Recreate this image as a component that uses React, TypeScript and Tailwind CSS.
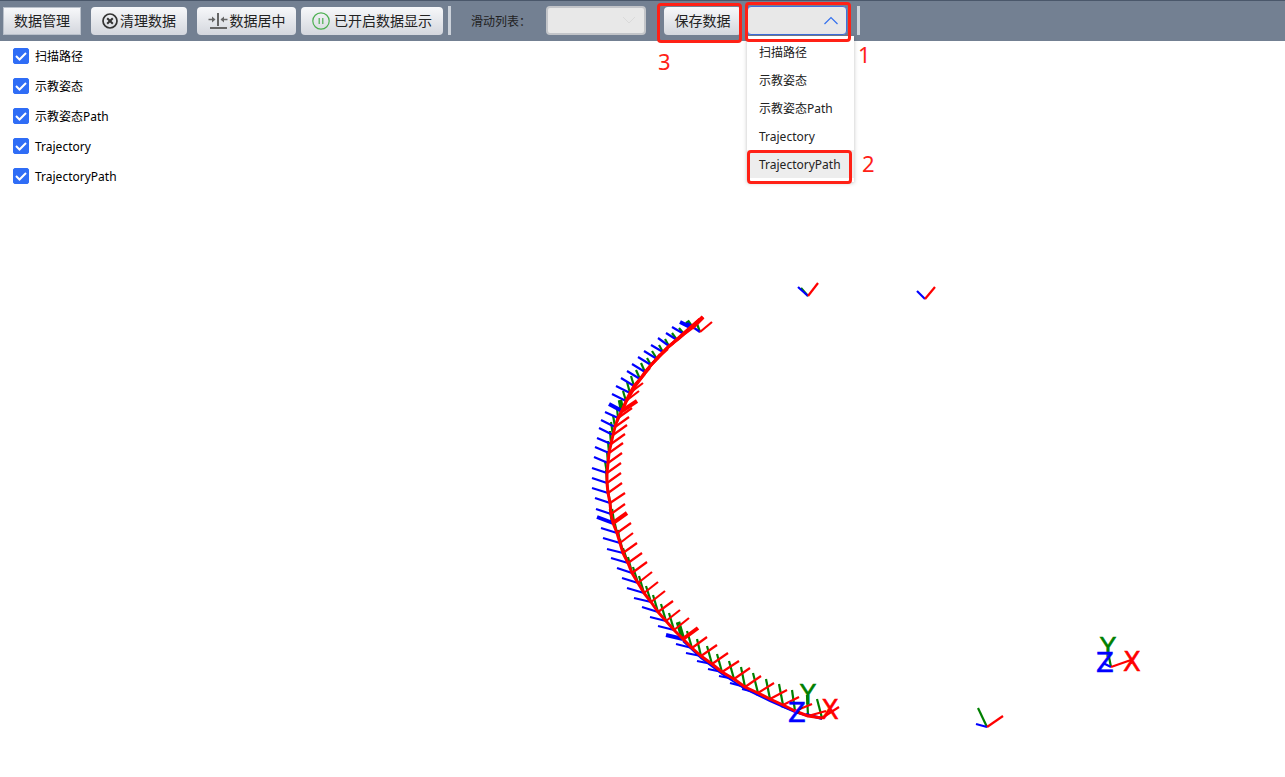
import React, { useState } from 'react';

type Point = [number, number];

interface Frame {
  o: Point;
  x?: Point;
  y?: Point;
  z?: Point;
  heavy?: boolean;
}

const layers = ['扫描路径', '示教姿态', '示教姿态Path', 'Trajectory', 'TrajectoryPath'];

const frames: Frame[] = [
  { o: [700, 332], x: [712, 322], y: [696, 321], z: [687, 323] },
  { o: [692, 328], x: [703, 317], y: [687, 321], z: [680, 322], heavy: true },
  { o: [684, 334], x: [695, 325], y: [679, 328], z: [672, 327] },
  { o: [677, 340], x: [688, 331], y: [672, 333], z: [666, 333] },
  { o: [669, 346], x: [680, 337], y: [665, 339], z: [658, 338] },
  { o: [663, 352], x: [674, 343], y: [659, 345], z: [651, 345] },
  { o: [657, 359], x: [668, 349], y: [652, 351], z: [644, 351] },
  { o: [651, 365], x: [660, 354], y: [647, 358], z: [638, 357] },
  { o: [645, 372], x: [656, 360], y: [641, 363], z: [632, 364] },
  { o: [640, 379], x: [650, 368], y: [636, 370], z: [627, 371] },
  { o: [634, 386], x: [645, 374], y: [631, 376], z: [621, 378] },
  { o: [630, 393], x: [643, 383], y: [627, 382], z: [616, 386] },
  { o: [626, 401], x: [639, 391], y: [623, 391], z: [612, 394] },
  { o: [622, 411], x: [637, 401], y: [620, 400], z: [609, 404], heavy: true },
  { o: [618, 418], x: [632, 408], y: [617, 408], z: [605, 412] },
  { o: [615, 427], x: [629, 417], y: [613, 415], z: [601, 420] },
  { o: [613, 435], x: [627, 425], y: [611, 422], z: [599, 428] },
  { o: [611, 444], x: [625, 434], y: [610, 431], z: [597, 438] },
  { o: [609, 453], x: [623, 443], y: [608, 441], z: [595, 447] },
  { o: [608, 463], x: [622, 453], y: [607, 451], z: [594, 457] },
  { o: [607, 473], x: [621, 463], y: [605, 461], z: [592, 468] },
  { o: [607, 483], x: [621, 473], y: [606, 470], z: [592, 478] },
  { o: [608, 493], x: [622, 483], y: [607, 481], z: [592, 488] },
  { o: [610, 503], x: [625, 493], y: [608, 490], z: [595, 498] },
  { o: [611, 514], x: [625, 504], y: [610, 500], z: [596, 509] },
  { o: [613, 523], x: [627, 513], y: [611, 509], z: [597, 517], heavy: true },
  { o: [617, 533], x: [631, 523], y: [614, 520], z: [601, 528] },
  { o: [620, 543], x: [633, 533], y: [618, 530], z: [603, 538] },
  { o: [623, 553], x: [637, 543], y: [620, 539], z: [607, 549] },
  { o: [628, 563], x: [642, 553], y: [623, 548], z: [611, 558] },
  { o: [632, 573], x: [647, 562], y: [628, 557], z: [617, 568] },
  { o: [638, 583], x: [652, 572], y: [633, 567], z: [622, 578] },
  { o: [644, 593], x: [658, 582], y: [639, 576], z: [627, 588] },
  { o: [651, 602], x: [665, 591], y: [646, 586], z: [634, 598] },
  { o: [658, 612], x: [673, 601], y: [653, 595], z: [642, 607] },
  { o: [666, 621], x: [680, 610], y: [661, 604], z: [650, 617] },
  { o: [674, 630], x: [689, 618], y: [669, 613], z: [658, 626] },
  { o: [683, 639], x: [698, 628], y: [678, 622], z: [666, 635], heavy: true },
  { o: [692, 648], x: [707, 637], y: [687, 631], z: [676, 644] },
  { o: [701, 656], x: [717, 645], y: [697, 639], z: [686, 653] },
  { o: [712, 664], x: [728, 653], y: [707, 646], z: [697, 661] },
  { o: [722, 672], x: [739, 661], y: [717, 654], z: [708, 669] },
  { o: [734, 679], x: [750, 668], y: [729, 661], z: [719, 676] },
  { o: [745, 687], x: [761, 676], y: [741, 667], z: [730, 683] },
  { o: [758, 693], x: [774, 683], y: [753, 673], z: [742, 689] },
  { o: [770, 699], x: [787, 690], y: [766, 679], z: [756, 694] },
  { o: [783, 705], x: [799, 697], y: [779, 684], z: [770, 700] },
  { o: [795, 711], x: [812, 704], y: [792, 690], z: [781, 706] },
  { o: [808, 716], x: [826, 711], y: [807, 695], z: [795, 712] },
  { o: [822, 718], x: [839, 707], y: [817, 699], z: [806, 714] },
  { o: [808, 296], x: [818, 283], y: [801, 288], z: [798, 287] },
  { o: [925, 299], x: [935, 287], z: [917, 291] },
  { o: [987, 727], x: [1003, 716], y: [978, 708], z: [976, 724] },
  { o: [1111, 667], x: [1131, 660], y: [1108, 652], z: [1103, 663] },
];

const spine = frames.slice(1, 50).map((f) => f.o.join(',')).join(' ');

function Axis({ from, to, color, width }: { from: Point; to?: Point; color: string; width: number }) {
  if (!to) return null;
  return <line x1={from[0]} y1={from[1]} x2={to[0]} y2={to[1]} stroke={color} strokeWidth={width} />;
}

function AxisLetters({ x, y, z }: { x: Point; y: Point; z: Point }) {
  return (
    <g fontFamily='"DejaVu Sans", sans-serif' fontSize="26" textAnchor="middle" strokeWidth="0.5">
      <text x={y[0]} y={y[1]} fill="#008000" stroke="#008000">Y</text>
      <text x={x[0]} y={x[1]} fill="#ff0000" stroke="#ff0000">X</text>
      <text x={z[0]} y={z[1]} fill="#0000ff" stroke="#0000ff">Z</text>
    </g>
  );
}

function Scene() {
  return (
    <svg
      viewBox="0 41 1285 736"
      preserveAspectRatio="xMidYMin meet"
      className="block h-auto w-full [grid-area:1/1]"
      role="img"
      aria-label="Trajectory"
    >
      {frames.map((f, i) => (
        <Axis key={i} from={f.o} to={f.y} color="#008000" width={f.heavy ? 4.5 : 2.2} />
      ))}
      {frames.map((f, i) => (
        <Axis key={i} from={f.o} to={f.z} color="#0000ff" width={f.heavy ? 4 : 2.2} />
      ))}
      <polyline points="683,641 701,658 722,674 745,689 770,701 795,712 822,719" fill="none" stroke="#0000ff" strokeWidth="2" />
      <polyline points={'703,317 ' + spine} fill="none" stroke="#ff0000" strokeWidth="3" strokeLinejoin="round" />
      <polyline points="700,319 684,333 666,349 651,365 636,385 626,402 617,421" fill="none" stroke="#ff0000" strokeWidth="3" />
      {frames.map((f, i) => (
        <Axis key={i} from={f.o} to={f.x} color="#ff0000" width={f.heavy ? 4 : 2.2} />
      ))}
      <AxisLetters y={[808, 704]} x={[830, 719]} z={[797, 722]} />
      <AxisLetters y={[1108, 657]} x={[1132, 671]} z={[1105, 672]} />
    </svg>
  );
}

const buttonLook =
  'flex h-7 shrink-0 items-center justify-center whitespace-nowrap bg-linear-to-b from-[#f7f8fa] to-[#d4d7de] text-sm text-[#222]';

function Separator() {
  return <div className="h-[29px] w-[3px] shrink-0 bg-[#ccd2da]" />;
}

function ClearIcon() {
  return (
    <svg width="16" height="16" viewBox="0 0 16 16" fill="none" stroke="#333" strokeWidth="1.7">
      <circle cx="8" cy="8" r="7" />
      <path d="M5.200 5.200l5.600 5.600M10.800 5.200l-5.600 5.600" strokeWidth="2" />
    </svg>
  );
}

function CenterIcon() {
  return (
    <svg width="20" height="18" viewBox="0 0 20 18" fill="none" stroke="#666" strokeWidth="1.6">
      <path d="M10 1v13" strokeWidth="2" />
      <path d="M2 16h17" strokeWidth="2" />
      <path d="M0.500 7.500h5M13.500 7.500h6" />
      <path d="M4 4.500l3.500 3-3.500 3zM16 4.500l-3.500 3 3.500 3z" fill="#666" stroke="none" />
    </svg>
  );
}

function PauseIcon() {
  return (
    <svg width="18" height="18" viewBox="0 0 18 18" fill="none" stroke="#4caf50" strokeWidth="1.2">
      <circle cx="9" cy="9" r="8.200" />
      <path d="M7.200 6v6M10.800 6v6" />
    </svg>
  );
}

export default function App() {
  const [shown, setShown] = useState<boolean[]>(layers.map(() => true));
  const [active, setActive] = useState(4);

  return (
    <div className="flex min-h-screen flex-col bg-white font-['Noto_Sans','Noto_Sans_CJK_SC',sans-serif] text-black">
      <header className="flex h-[41px] items-center border-t border-[#4a576a] bg-[#738092] pb-px pl-[3px]">
        <button type="button" className={buttonLook + ' w-[78px] border border-[#b9c0ca]'}>
          数据管理
        </button>
        <button type="button" className={buttonLook + ' ml-2.5 w-24 gap-0.5 rounded'}>
          <ClearIcon />
          清理数据
        </button>
        <button type="button" className={buttonLook + ' ml-2.5 w-[99px] gap-0.5 rounded'}>
          <CenterIcon />
          数据居中
        </button>
        <button type="button" className={buttonLook + ' mr-[5px] ml-[5px] w-[142px] gap-1 rounded'}>
          <PauseIcon />
          已开启数据显示
        </button>
        <Separator />
        <label htmlFor="slide-list" className="ml-5 w-[75px] shrink-0 pt-0.5 text-xs whitespace-nowrap text-[#222]">
          滑动列表：
        </label>
        <div className="relative shrink-0">
          <select
            id="slide-list"
            disabled
            className="block h-[29px] w-[100px] appearance-none rounded border-2 border-[#c3c5c9] bg-[#e8e8e8]"
          />
          <svg className="absolute top-2.5 right-2.5" width="14" height="9" viewBox="0 0 14 9" fill="none" stroke="#dadada">
            <path d="M1 1l6 6 6-6" />
          </svg>
        </div>

        <div className="relative ml-[18px] shrink-0">
          <button type="button" className={buttonLook + ' w-[77px] rounded'}>
            保存数据
          </button>
          <div className="pointer-events-none absolute -top-1 -left-[7px] h-10 w-[85px] rounded-sm border-3 border-[#ff2116]" />
          <span className="absolute top-10 -left-1.5 text-[22px] leading-7 text-[#ff2116]">3</span>
        </div>

        <div className="relative mr-2.5 ml-1.5 shrink-0">
          <select
            aria-label="保存数据列表"
            className="block h-[29px] w-[100px] appearance-none rounded border border-[#3f6fe0] bg-[#e8e8e8]"
          />
          <svg className="absolute top-2.5 right-2" width="16" height="9" viewBox="0 0 16 9" fill="none" stroke="#3370ee" strokeWidth="1.2">
            <path d="M1.500 8l6.500-6.500 6.500 6.500" />
          </svg>
          <ul
            role="listbox"
            aria-label="保存数据列表"
            className="absolute top-[30px] left-0 z-10 w-[107px] bg-white pt-0.5 pb-1 text-xs shadow-[0_1px_4px_rgba(0,0,0,0.25)]"
          >
            {layers.map((name, i) => (
              <li key={name} role="option" aria-selected={i === active}>
                <button
                  type="button"
                  onClick={() => setActive(i)}
                  className={
                    'flex h-7 w-full items-center pt-0.5 pl-3 whitespace-nowrap text-[#222] ' +
                    (i === active ? 'bg-[#ededed]' : 'bg-white')
                  }
                >
                  {name}
                </button>
              </li>
            ))}
          </ul>
          <div className="pointer-events-none absolute -top-1 -left-0.5 z-20 h-10 w-[106px] rounded-sm border-3 border-[#ff2116]" />
          <div className="pointer-events-none absolute top-36 left-0 z-20 h-[34px] w-[105px] rounded-sm border-3 border-[#ff2116]" />
          <span className="absolute top-[34px] left-[111px] text-[22px] leading-7 text-[#ff2116]">1</span>
          <span className="absolute top-[143px] left-[115px] text-[22px] leading-7 text-[#ff2116]">2</span>
        </div>
        <Separator />
      </header>

      <main className="grid">
        <Scene />
        <div className="z-[1] self-start justify-self-start pl-[13px] [grid-area:1/1]">
          {layers.map((name, i) => (
            <label key={name} className="flex h-[30px] items-center gap-1.5 text-xs whitespace-nowrap">
              <span className="grid size-4">
                <input
                  type="checkbox"
                  checked={shown[i]}
                  onChange={() => setShown(shown.map((v, k) => (k === i ? !v : v)))}
                  className="size-4 appearance-none rounded-xs border border-[#2f6df6] bg-white [grid-area:1/1] checked:bg-[#2f6df6]"
                />
                <svg
                  className="pointer-events-none [grid-area:1/1]"
                  width="16"
                  height="16"
                  viewBox="0 0 16 16"
                  fill="none"
                  stroke="#fff"
                  strokeWidth="2"
                >
                  <path d="M3 8l3.500 3.500L13 5" />
                </svg>
              </span>
              <span className="pt-0.5">{name}</span>
            </label>
          ))}
        </div>
      </main>
    </div>
  );
}
